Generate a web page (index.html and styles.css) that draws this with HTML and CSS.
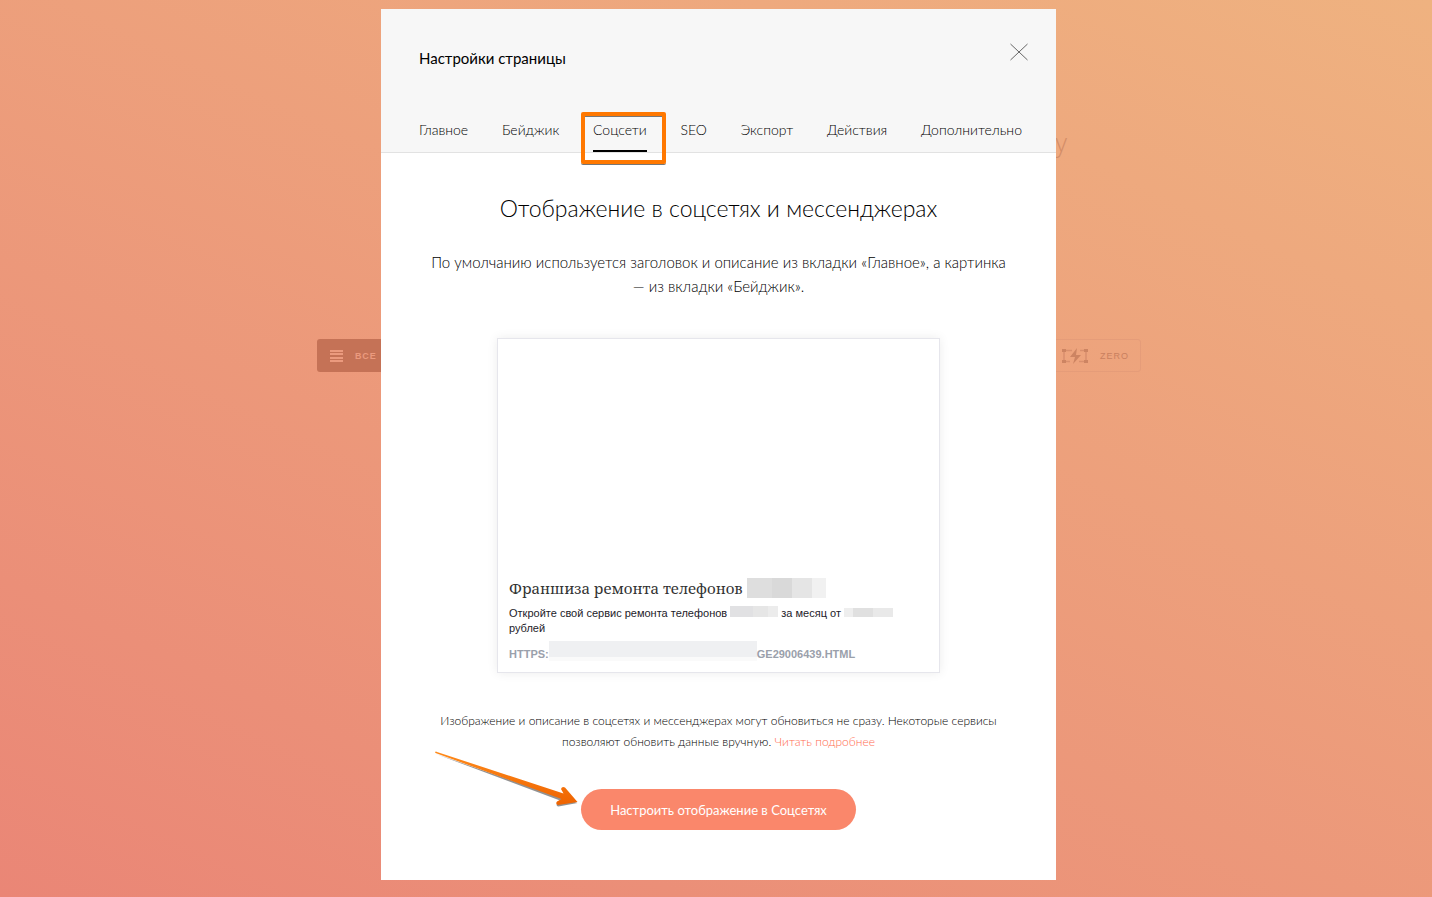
FILE: index.html
```html
<!DOCTYPE html>
<html lang="ru">
<head>
  <meta charset="UTF-8">
  <title>Настройки страницы</title>
  <meta name="viewport" content="width=device-width, initial-scale=1.0">
  <link rel="stylesheet" href="styles.css">
</head>
<body>
  <!-- editor page behind the popup -->
  <div class="editor">
    <div class="editor-title">у</div>
    <div class="editor-bar">
      <button type="button" class="all-btn">
        <svg width="13" height="13" viewBox="0 0 13 13"><path d="M0 2h13M0 5h13M0 9h13M0 12h13" stroke="#eb9a7e" stroke-width="2"/></svg>
        ВСЕ
      </button>
      <button type="button" class="zero-btn">
        <svg width="26" height="16" viewBox="0 0 26 16">
          <path d="M2 2.500h8M2 2v12M2 13.500h6M18 2.500h6M24 2v12M17 13.500h7" stroke="#d98f6d" stroke-width="1.500" fill="none"/>
          <path d="M0 1h4v3H0zM22 1h4v3h-4zM0 12h4v3H0zM22 12h4v3h-4z" fill="#cd8462"/>
          <path d="M15 0L8 9h5l-2 7 8-9h-5z" fill="#cd8462"/>
        </svg>
        ZERO
      </button>
    </div>
  </div>

  <div class="popup">
    <header class="popup-header">
      <div class="popup-top">
        <h1>Настройки страницы</h1>
        <button type="button" class="close" aria-label="Закрыть">
          <svg width="20" height="20" viewBox="0 0 20 20"><path d="M1.500 2l17 16M18.500 2l-17 16" stroke="#666" stroke-width="1" fill="none"/></svg>
        </button>
      </div>
      <nav class="tabs">
        <a href="#main">Главное</a>
        <a href="#badge">Бейджик</a>
        <a href="#social" class="active">Соцсети</a>
        <a href="#seo">SEO</a>
        <a href="#export">Экспорт</a>
        <a href="#actions">Действия</a>
        <a href="#more">Дополнительно</a>
      </nav>
    </header>

    <main class="content">
      <h2>Отображение в соцсетях и мессенджерах</h2>
      <p class="lead">По умолчанию используется заголовок и описание из вкладки «Главное», а картинка<br>— из вкладки «Бейджик».</p>

      <div class="card">
        <div class="card-image"></div>
        <div class="card-title">Франшиза ремонта телефонов <span class="mask mask-title"></span></div>
        <div class="card-text">Откройте свой сервис ремонта телефонов <span class="mask mask-city"></span> за месяц от <span class="mask mask-price"></span><br>рублей</div>
        <div class="card-url">HTTPS:<span class="mask mask-url"></span>GE29006439.HTML</div>
      </div>

      <p class="note">Изображение и описание в соцсетях и мессенджерах могут обновиться не сразу. Некоторые сервисы<br>позволяют обновить данные вручную. <a href="#help">Читать подробнее</a></p>

      <div class="action">
        <button type="button" class="main-btn">Настроить отображение в Соцсетях</button>
        <svg class="arrow" width="146" height="58" viewBox="0 0 146 58">
          <defs>
            <linearGradient id="arrowFill" x1="0" y1="0" x2="0" y2="1">
              <stop offset="0" stop-color="#ff8a1a"/>
              <stop offset="1" stop-color="#ee6300"/>
            </linearGradient>
          </defs>
          <path d="M2 3L126 49.500l-3.500 4q0 2 2 2L143.500 52z" fill="#777" opacity=".8"/>
          <path d="M1 1q1-1 2 0L129.500 42.500l-2.500-4.500q1-3 4-1.500L143.500 51 124 54q-3-1-1-3.500l4.500-2.500L1.500 2z" fill="url(#arrowFill)"/>
        </svg>
      </div>
    </main>
  </div>
</body>
</html>
```
FILE: styles.css
```css
:root {
  --accent: #fa876b;
  --mark: #ff7800;
  --thin: Lato, "Open Sans", sans-serif;
}

* {
  box-sizing: border-box;
}

body {
  margin: 0;
  min-height: 100vh;
  padding: 9px 0 17px 5px;
  position: relative;
  background: linear-gradient(25deg, #ea8676, #efb280);
  font-family: var(--thin);
  color: #000;
}

button {
  border: none;
  background: none;
  padding: 0;
  cursor: pointer;
}

/* editor behind */
.editor {
  position: absolute;
  top: 126px;
  left: 26px;
  right: 0;
}

.editor-title {
  width: 676px;
  margin: 0 auto;
  font: 300 25px/32px "Open Sans", sans-serif;
  text-align: right;
  color: #d38d68;
}

.editor-bar {
  display: flex;
  justify-content: space-between;
  max-width: 824px;
  margin: 181px auto 0;
}

.editor-bar button {
  display: flex;
  align-items: center;
  gap: 12px;
  height: 33px;
  padding: 0 11px 0 13px;
  border-radius: 3px;
  font: 9px "Liberation Sans", sans-serif;
  letter-spacing: 1px;
}

.editor-bar .all-btn {
  width: 120px;
  background: #c57256;
  color: #eb9a7e;
  font-weight: bold;
}

.editor-bar .zero-btn {
  width: 120px;
  justify-content: flex-end;
  border: 1px solid #e59c79;
  color: #c9805f;
}

/* popup */
.popup {
  position: relative;
  max-width: 675px;
  margin: 0 auto;
  background: #fff;
}

.popup-header {
  padding: 33px 27px 0 38px;
  background: #f7f7f7;
  border-bottom: 1px solid #e2e2e2;
}

.popup-top {
  display: flex;
  justify-content: space-between;
}

h1 {
  margin: 6px 0 0;
  font-size: 15px;
  line-height: 20px;
  font-weight: 400;
}

.close {
  height: 20px;
}

.tabs {
  display: flex;
  justify-content: space-between;
  margin: 52px 7px 0 0;
}

.tabs a {
  height: 32px;
  border-bottom: 2px solid transparent;
  font-size: 14px;
  line-height: 20px;
  font-weight: 300;
  color: #000;
  text-decoration: none;
}

.tabs .active {
  position: relative;
  border-color: #000;
}

.tabs .active::after {
  content: "";
  position: absolute;
  inset: -8px -19px -14px -12px;
  border: 4px solid var(--mark);
  border-radius: 2px;
  box-shadow: 0 1px 0 #777, inset 0 1px 0 #777;
}

.content {
  padding: 35px 40px 50px;
  text-align: center;
}

h2 {
  margin: 0;
  font-size: 23px;
  line-height: 40px;
  font-weight: 300;
}

.lead {
  margin: 22px 0 40px;
  font-size: 15px;
  line-height: 24px;
  font-weight: 300;
  white-space: nowrap;
}

.card {
  max-width: 443px;
  margin: 0 auto;
  padding: 0 12px 8px 11px;
  border: 1px solid #e6e6ec;
  box-shadow: 0 0 10px rgba(0, 0, 0, 0.08);
  text-align: left;
  font-family: "Liberation Sans", sans-serif;
}

.card-image {
  height: 237px;
}

.card-title {
  height: 24px;
  font-family: "Noto Serif", "Liberation Serif", serif;
  font-size: 15px;
  line-height: 24px;
  color: #333;
  white-space: nowrap;
}

.card-text {
  margin-top: 6px;
  font-size: 11px;
  line-height: 15px;
  color: #1d2129;
  white-space: nowrap;
}

.card-url {
  height: 20px;
  margin-top: 8px;
  font-size: 11px;
  line-height: 20px;
  font-weight: bold;
  color: #9aa0ab;
  white-space: nowrap;
}

/* pixelated areas */
.mask {
  display: inline-block;
  vertical-align: top;
}

.mask-title {
  width: 79px;
  height: 20px;
  margin-top: 2px;
  background: linear-gradient(90deg, #dedede 25px, #d9d9d9 25px 45px, #e5e5e5 45px 65px, #f1f1f1 65px);
}

.mask-city {
  width: 48px;
  height: 11px;
  background: linear-gradient(90deg, #e1e1e3 23px, #e6e6e6 23px 38px, #ececec 38px);
}

.mask-price {
  width: 49px;
  height: 9px;
  margin-top: 2px;
  background: linear-gradient(90deg, #eee 9px, #e0e0e0 9px 29px, #e9e9e9 29px);
}

.mask-url {
  width: 208px;
  height: 20px;
  margin-top: -3px;
  background: linear-gradient(#eff0f2 16px, #fafafa 16px);
}

.note {
  margin: 37px 0;
  font-size: 12px;
  line-height: 21px;
  font-weight: 300;
  white-space: nowrap;
}

.note a {
  color: #ff6b4f;
  text-decoration: none;
}

.action {
  position: relative;
  width: 275px;
  margin: 0 auto;
}

.main-btn {
  width: 100%;
  height: 41px;
  border-radius: 21px;
  background: var(--accent);
  color: #fff;
  font: 400 13px var(--thin);
}

.arrow {
  position: absolute;
  top: -38px;
  left: -147px;
}
```
